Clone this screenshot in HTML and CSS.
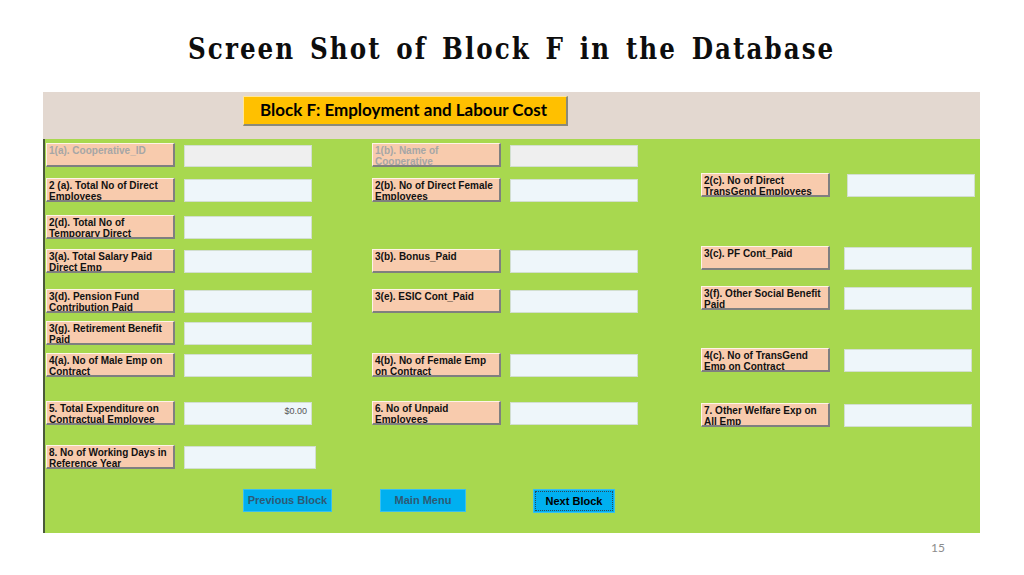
FILE: index.html
```html
<!DOCTYPE html>
<html>
<head>
<meta charset="utf-8">
<link rel="stylesheet" href="styles.css">
</head>
<body>
<div class="slide">
  <h1 class="title"><span class="title-text">Screen Shot of Block F in the Database</span></h1>
  <div class="frame">
    <div class="band">
      <div class="block-title">Block F: Employment and Labour Cost</div>
    </div>
    <div class="form">
      <div class="cols">
        <div class="col c1">
          <div class="row"><div class="lbl off">1(a). Cooperative_ID</div><div class="box off"></div></div>
          <div class="row"><div class="lbl">2 (a). Total No of Direct Employees</div><div class="box"></div></div>
          <div class="row"><div class="lbl">2(d). Total No of Temporary Direct</div><div class="box"></div></div>
          <div class="row"><div class="lbl">3(a). Total Salary Paid Direct Emp</div><div class="box"></div></div>
          <div class="row"><div class="lbl">3(d). Pension Fund Contribution Paid</div><div class="box"></div></div>
          <div class="row"><div class="lbl">3(g). Retirement Benefit Paid</div><div class="box"></div></div>
          <div class="row"><div class="lbl">4(a). No of Male Emp on Contract</div><div class="box"></div></div>
          <div class="row"><div class="lbl">5. Total Expenditure on Contractual Employee</div><div class="box money">$0.00</div></div>
          <div class="row"><div class="lbl">8. No of Working Days in Reference Year</div><div class="box wide"></div></div>
        </div>
        <div class="col c2">
          <div class="row"><div class="lbl off">1(b). Name of Cooperative</div><div class="box off"></div></div>
          <div class="row"><div class="lbl">2(b). No of Direct Female Employees</div><div class="box"></div></div>
          <div class="row"><div class="lbl">3(b). Bonus_Paid</div><div class="box"></div></div>
          <div class="row"><div class="lbl">3(e). ESIC Cont_Paid</div><div class="box"></div></div>
          <div class="row"><div class="lbl">4(b). No of Female Emp on Contract</div><div class="box"></div></div>
          <div class="row"><div class="lbl">6. No of Unpaid Employees</div><div class="box"></div></div>
        </div>
        <div class="col c3">
          <div class="row"><div class="lbl">2(c). No of Direct TransGend Employees</div><div class="box"></div></div>
          <div class="row"><div class="lbl">3(c). PF Cont_Paid</div><div class="box"></div></div>
          <div class="row"><div class="lbl">3(f). Other Social Benefit Paid</div><div class="box"></div></div>
          <div class="row"><div class="lbl">4(c). No of TransGend Emp on Contract</div><div class="box"></div></div>
          <div class="row"><div class="lbl">7. Other Welfare Exp on All Emp</div><div class="box"></div></div>
        </div>
      </div>
      <div class="buttons">
        <div class="btn prev">Previous Block</div>
        <div class="btn menu">Main Menu</div>
        <div class="btn next"><span class="focus">Next Block</span></div>
      </div>
    </div>
  </div>
  <div class="pagenum">15</div>
</div>
</body>
</html>
```
FILE: styles.css
```css
html, body {
  margin: 0;
  padding: 0;
  background: #ffffff;
}
.slide {
  width: 1024px;
  height: 575px;
  position: relative;
  overflow: hidden;
}
.title {
  margin: 0;
  height: 92px;
  padding-top: 29px;
  box-sizing: border-box;
  text-align: center;
  font-family: "DejaVu Serif", serif;
  font-weight: bold;
  font-size: 30px;
  line-height: 40px;
  color: #0d0d0d;
  white-space: nowrap;
}
.title-text {
  display: inline-block;
  transform: scaleX(0.82);
  transform-origin: center;
  letter-spacing: 2.5px;
  word-spacing: 5px;
}
.frame {
  margin-left: 43px;
  width: 937px;
}
.band {
  height: 47px;
  background: #e3d8d0;
  padding-top: 4px;
  box-sizing: border-box;
}
.block-title {
  margin-left: 200px;
  width: 325px;
  height: 30px;
  box-sizing: border-box;
  background: #ffc000;
  border-top: 1px solid #ffe699;
  border-left: 1px solid #ffe699;
  border-right: 2px solid #8a8a7a;
  border-bottom: 2px solid #8a8a7a;
  font-family: Lato, "Open Sans", sans-serif;
  font-weight: bold;
  font-size: 17px;
  line-height: 26px;
  padding-left: 16px;
  color: #000;
  white-space: nowrap;
}
.form {
  height: 394px;
  background: #a8d84f;
  border-left: 2px solid #4a5a3a;
  box-sizing: border-box;
  padding-left: 1px;
}
.cols {
  display: flex;
}
.col {
  display: flex;
  flex-direction: column;
}
.c1 { width: 326px; padding-top: 4px; }
.c2 { width: 329px; padding-top: 4px; }
.c3 { padding-top: 34px; }

.c1 .row:nth-child(2) { margin-top: 11px; }
.c1 .row:nth-child(3) { margin-top: 13px; }
.c1 .row:nth-child(4) { margin-top: 10px; }
.c1 .row:nth-child(5) { margin-top: 16px; }
.c1 .row:nth-child(6) { margin-top: 8px; }
.c1 .row:nth-child(7) { margin-top: 8px; }
.c1 .row:nth-child(8) { margin-top: 24px; }
.c1 .row:nth-child(9) { margin-top: 20px; }

.c2 .row:nth-child(2) { margin-top: 11px; }
.c2 .row:nth-child(3) { margin-top: 47px; }
.c2 .row:nth-child(4) { margin-top: 16px; }
.c2 .row:nth-child(5) { margin-top: 40px; }
.c2 .row:nth-child(6) { margin-top: 24px; }

.c3 .row:nth-child(2) { margin-top: 49px; }
.c3 .row:nth-child(3) { margin-top: 16px; }
.c3 .row:nth-child(4) { margin-top: 38px; }
.c3 .row:nth-child(5) { margin-top: 31px; }
.c3 .box { margin-left: 14px; }
.c3 .row:first-child .box { margin-left: 17px; }

.row {
  display: flex;
  align-items: flex-start;
}
.lbl {
  width: 129px;
  height: 24px;
  box-sizing: border-box;
  background: #f8cbad;
  border-top: 1px solid #fff3e8;
  border-left: 1px solid #fff3e8;
  border-right: 2px solid #7f7f7f;
  border-bottom: 2px solid #7f7f7f;
  padding: 1px 2px 0 2px;
  font-family: "Liberation Sans", Arial, sans-serif;
  font-weight: bold;
  font-size: 10px;
  line-height: 11px;
  color: #111;
  overflow: hidden;
}
.lbl.off {
  color: #a6a6a6;
}
.box {
  width: 128px;
  height: 23px;
  margin-top: 1px;
  margin-left: 9px;
  box-sizing: border-box;
  background: #eef6fa;
  border: 1px solid #d2dfd0;
}
.box.off {
  background: #efefef;
  height: 22px;
  margin-top: 2px;
}
.box.wide {
  width: 132px;
}
.box.money {
  text-align: right;
  padding: 2px 4px 0 0;
  font-family: "Liberation Sans", Arial, sans-serif;
  font-size: 9px;
  line-height: 12px;
  color: #555;
}
.buttons {
  display: flex;
  margin-top: 20px;
}
.btn {
  height: 23px;
  box-sizing: border-box;
  background: #00b0f0;
  border: 1px solid #38c0f0;
  font-family: "Liberation Sans", Arial, sans-serif;
  font-weight: bold;
  font-size: 11px;
  line-height: 21px;
  text-align: center;
  color: #2d5a75;
}
.prev { width: 89px; margin-left: 197px; }
.menu { width: 86px; margin-left: 48px; }
.next {
  width: 82px;
  height: 24px;
  margin-left: 67px;
  padding: 1px;
  color: #000;
}
.focus {
  display: block;
  height: 100%;
  box-sizing: border-box;
  border: 1px dotted #2a4a5a;
  line-height: 18px;
}
.pagenum {
  position: absolute;
  left: 931px;
  top: 540px;
  font-family: Lato, "Open Sans", sans-serif;
  font-size: 12px;
  color: #8c8c8c;
}
```
